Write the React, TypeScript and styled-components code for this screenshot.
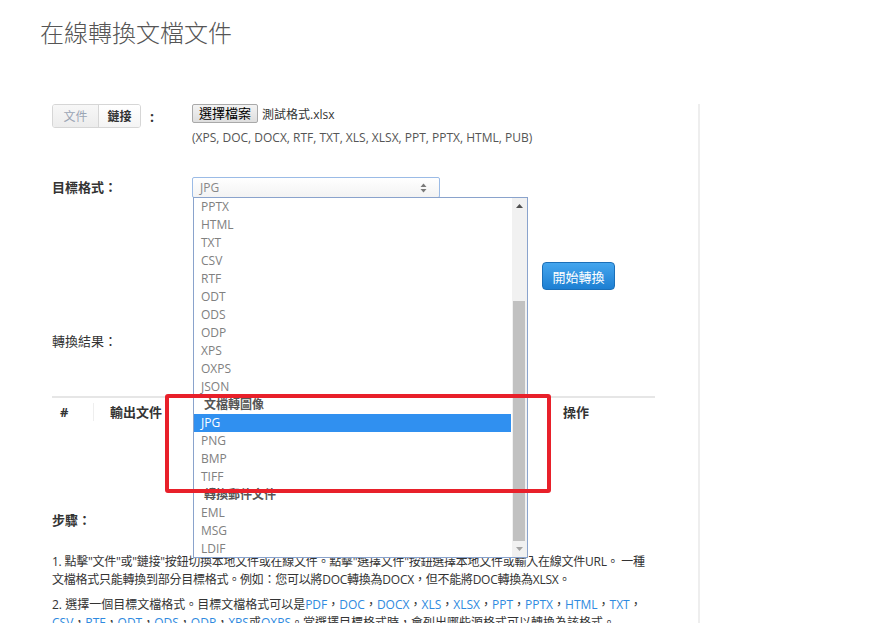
import React from "react";
import styled, {createGlobalStyle} from "styled-components";

const GlobalStyle = createGlobalStyle`
  html, body {
    margin: 0;
    padding: 0;
    background: #fff;
  }
  body {
    font-family: "Open Sans", "Noto Sans CJK TC", sans-serif;
    font-size: 12px;
    color: #333;
    overflow: hidden;
  }
`

type Option = { label: string, group?: boolean, selected?: boolean }

const options: Option[] = [
    {label: "PPTX"}, {label: "HTML"}, {label: "TXT"}, {label: "CSV"}, {label: "RTF"},
    {label: "ODT"}, {label: "ODS"}, {label: "ODP"}, {label: "XPS"}, {label: "OXPS"},
    {label: "JSON"}, {label: "文檔轉圖像", group: true}, {label: "JPG", selected: true},
    {label: "PNG"}, {label: "BMP"}, {label: "TIFF"}, {label: "轉換郵件文件", group: true},
    {label: "EML"}, {label: "MSG"}, {label: "LDIF"},
]

const formatLinks = ["PDF", "DOC", "DOCX", "XLS", "XLSX", "PPT", "PPTX", "HTML", "TXT", "CSV", "RTF", "ODT", "ODS", "ODP"]

const App: React.FC = () => {
    return (
        <Page>
            <GlobalStyle/>
            <Title>在線轉換文檔文件</Title>
            <Main>
                <FormRow>
                    <LabelCell>
                        <Toggle>
                            <ToggleButton $active>文件</ToggleButton>
                            <ToggleButton>鏈接</ToggleButton>
                        </Toggle>
                        <Colon>:</Colon>
                    </LabelCell>
                    <FieldCell>
                        <FileLine>
                            <FileButton>選擇檔案</FileButton>
                            <FileName>測試格式.xlsx</FileName>
                        </FileLine>
                        <Hint>(XPS, DOC, DOCX, RTF, TXT, XLS, XLSX, PPT, PPTX, HTML, PUB)</Hint>
                    </FieldCell>
                </FormRow>

                <FormRow $top={30}>
                    <LabelCell>
                        <BoldLabel>目標格式：</BoldLabel>
                    </LabelCell>
                    <SelectWrap>
                        <SelectBox>
                            <span>JPG</span>
                            <svg width="7" height="10" viewBox="0 0 7 10">
                                <path d="M3.5 0.5 L6.5 4 L0.5 4 Z" fill="#7a7a7a"/>
                                <path d="M3.5 9.5 L6.5 6 L0.5 6 Z" fill="#7a7a7a"/>
                            </svg>
                        </SelectBox>
                        <DropList>
                            <OptionsColumn>
                                {options.map(o => (
                                    <OptionItem key={o.label} $group={o.group} $selected={o.selected}>
                                        {o.label}
                                    </OptionItem>
                                ))}
                            </OptionsColumn>
                            <Scrollbar>
                                <ScrollArrow>
                                    <svg width="7" height="4" viewBox="0 0 7 4">
                                        <path d="M3.5 0 L7 4 L0 4 Z" fill="#505050"/>
                                    </svg>
                                </ScrollArrow>
                                <Track>
                                    <Thumb style={{marginTop: 86, height: 240}}/>
                                </Track>
                                <ScrollArrow>
                                    <svg width="7" height="4" viewBox="0 0 7 4">
                                        <path d="M3.5 4 L7 0 L0 0 Z" fill="#a3a3a3"/>
                                    </svg>
                                </ScrollArrow>
                            </Scrollbar>
                        </DropList>
                    </SelectWrap>
                </FormRow>

                <ButtonRow>
                    <ConvertButton>開始轉換</ConvertButton>
                </ButtonRow>

                <PlainLabel>轉換結果：</PlainLabel>

                <ResultTable>
                    <HeadCell $divider>#</HeadCell>
                    <HeadCell>輸出文件</HeadCell>
                    <HeadCell>操作</HeadCell>
                </ResultTable>

                <StepsLabel>步驟：</StepsLabel>

                <Para>
                    1. 點擊"文件"或"鏈接"按鈕切換本地文件或在線文件。點擊"選擇文件"按鈕選擇本地文件或輸入在線文件URL。 一種文檔格式只能轉換到部分目標格式。例如：您可以將DOC轉換為DOCX，但不能將DOC轉換為XLSX。
                </Para>
                <Para $top={7} $spacing={0}>
                    2. 選擇一個目標文檔格式。目標文檔格式可以是
                    {formatLinks.map(f => (
                        <React.Fragment key={f}>
                            <FormatLink>{f}</FormatLink>，
                        </React.Fragment>
                    ))}
                    <FormatLink>XPS</FormatLink>或<FormatLink>OXPS</FormatLink>。當選擇目標格式時，會列出哪些源格式可以轉換為該格式。
                </Para>
            </Main>
            <Highlight/>
        </Page>
    )
}

export default App

const Page = styled.div`
  position: relative;
  padding-left: 40px;
  height: 623px;
  overflow: hidden;
`
const Title = styled.h1`
  margin: 0;
  padding-top: 18px;
  font-size: 24px;
  line-height: 30px;
  font-weight: 300;
  color: #555;
`
const Main = styled.div`
  margin: 56px 0 0 12px;
  width: 603px;
  padding-right: 43px;
  border-right: 2px solid #eeeeee;
  min-height: 600px;
`
const FormRow = styled.div<{ $top?: number }>`
  display: flex;
  align-items: flex-start;
  margin-top: ${p => p.$top ?? 0}px;
`
const LabelCell = styled.div`
  width: 140px;
  flex-shrink: 0;
  display: flex;
  align-items: center;
`
const Toggle = styled.div`
  display: flex;
  border: 1px solid #d6d6d6;
  border-radius: 3px;
  overflow: hidden;
  height: 22px;
`
const ToggleButton = styled.div<{ $active?: boolean }>`
  display: flex;
  align-items: center;
  justify-content: center;
  width: ${p => p.$active ? 45 : 41}px;
  font-size: 12px;
  font-weight: ${p => p.$active ? "normal" : "bold"};
  color: ${p => p.$active ? "#9aa4b4" : "#333"};
  background: ${p => p.$active ? "linear-gradient(#f7f7f7, #ececec)" : "linear-gradient(#ffffff, #f4f4f4)"};
  & + & {
    border-left: 1px solid #d6d6d6;
  }
`
const Colon = styled.span`
  margin-left: 9px;
  font-weight: bold;
  font-size: 14px;
`
const FieldCell = styled.div`
  display: flex;
  flex-direction: column;
`
const FileLine = styled.div`
  display: flex;
  align-items: center;
  height: 19px;
`
const FileButton = styled.div`
  height: 19px;
  box-sizing: border-box;
  padding: 0 6px;
  border: 1px solid #a9a9a9;
  border-radius: 2px;
  background: linear-gradient(#f3f3f3, #dedede);
  font-size: 13px;
  line-height: 17px;
  color: #000;
`
const FileName = styled.span`
  margin-left: 4px;
  font-size: 12px;
  color: #333;
`
const Hint = styled.div`
  margin-top: 6px;
  line-height: 18px;
  font-size: 12px;
  color: #555;
`
const BoldLabel = styled.span`
  font-weight: bold;
  font-size: 13px;
  line-height: 21px;
`
const SelectWrap = styled.div`
  position: relative;
`
const SelectBox = styled.div`
  width: 248px;
  height: 21px;
  box-sizing: border-box;
  padding: 0 12px 0 7px;
  display: flex;
  align-items: center;
  justify-content: space-between;
  border: 1px solid #9bbbe6;
  border-radius: 2px;
  background: linear-gradient(#ffffff, #f3f3f3);
  color: #888;
  font-size: 12px;
`
const DropList = styled.div`
  position: absolute;
  top: 20px;
  left: 1px;
  z-index: 2;
  width: 335px;
  height: 361px;
  box-sizing: border-box;
  display: flex;
  border: 1px solid #8aa3cc;
  background: #fff;
`
const OptionsColumn = styled.div`
  flex: 1;
  display: flex;
  flex-direction: column;
`
const OptionItem = styled.div<{ $group?: boolean, $selected?: boolean }>`
  height: 18px;
  line-height: 18px;
  padding-left: ${p => p.$group ? 10 : 7}px;
  font-size: 12px;
  font-weight: ${p => p.$group ? "bold" : "normal"};
  color: ${p => p.$selected ? "#fff" : p.$group ? "#555" : "#808080"};
  background: ${p => p.$selected ? "#3090f0" : "transparent"};
`
const Scrollbar = styled.div`
  width: 15px;
  margin-left: 1px;
  display: flex;
  flex-direction: column;
  background: #f1f1f1;
`
const ScrollArrow = styled.div`
  height: 17px;
  display: flex;
  align-items: center;
  justify-content: center;
`
const Track = styled.div`
  flex: 1;
  display: flex;
  flex-direction: column;
`
const Thumb = styled.div`
  margin: 0 2px 0 1px;
  background: #c1c1c1;
`
const ButtonRow = styled.div`
  display: flex;
  padding-left: 490px;
  margin-top: 64px;
`
const ConvertButton = styled.div`
  width: 73px;
  height: 28px;
  box-sizing: border-box;
  display: flex;
  align-items: center;
  justify-content: center;
  border: 1px solid #1b6fb8;
  border-radius: 4px;
  background: linear-gradient(#45a6ee, #1d7fd2);
  color: #fff;
  font-size: 13px;
`
const PlainLabel = styled.div`
  margin-top: 42px;
  font-size: 13px;
  line-height: 18px;
`
const ResultTable = styled.div`
  margin-top: 46px;
  display: grid;
  grid-template-columns: 50px 1fr 100px;
  border-top: 2px solid #e6e6e6;
  padding: 5px 0 8px;
`
const HeadCell = styled.div<{ $divider?: boolean }>`
  padding-left: 8px;
  font-size: 13px;
  font-weight: bold;
  line-height: 18px;
  border-right: ${p => p.$divider ? "1px solid #eee" : "none"};
  margin-right: ${p => p.$divider ? 8 : 0}px;
`
const StepsLabel = styled.div`
  margin-top: 82px;
  font-size: 13px;
  font-weight: bold;
  line-height: 18px;
`
const Para = styled.p<{ $top?: number, $spacing?: number }>`
  margin: ${p => p.$top ?? 24}px 0 0;
  font-size: 12px;
  line-height: 18px;
  letter-spacing: ${p => p.$spacing ?? -0.25}px;
  color: #333;
`
const FormatLink = styled.a`
  color: #2f8ae0;
  text-decoration: none;
`
const Highlight = styled.div`
  position: absolute;
  left: 165px;
  top: 394px;
  width: 386px;
  height: 99px;
  box-sizing: border-box;
  border: 4px solid #e8202a;
  border-radius: 3px;
  z-index: 3;
`
